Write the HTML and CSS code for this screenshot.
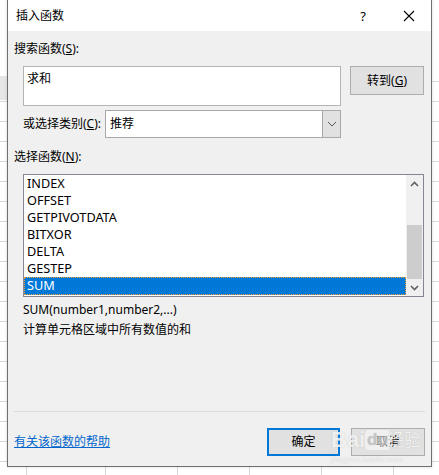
FILE: index.html
```html
<!DOCTYPE html>
<html lang="zh-CN">
<head>
<meta charset="utf-8">
<title>插入函数</title>
<link rel="stylesheet" href="styles.css">
</head>
<body>
<div class="page">
  <div class="dialog">
    <div class="titlebar">
      <span class="title">插入函数</span>
      <span class="help">?</span>
      <span class="close"><svg width="12" height="12" viewBox="0 0 12 12"><path d="M1 1 L11 11 M11 1 L1 11" stroke="#000" stroke-width="1.1" fill="none"/></svg></span>
    </div>
    <div class="body">
      <div class="label l1">搜索函数(<u>S</u>):</div>
      <div class="search-row">
        <div class="search-box">求和</div>
        <div class="btn goto">转到(<u>G</u>)</div>
      </div>
      <div class="cat-row">
        <span class="cat-label">或选择类别(<u>C</u>):</span>
        <div class="select">
          <span class="select-text">推荐</span>
          <span class="select-btn"><svg width="10" height="6" viewBox="0 0 10 6"><path d="M1 1 L5 5 L9 1" stroke="#555" stroke-width="1" fill="none"/></svg></span>
        </div>
      </div>
      <div class="label l2">选择函数(<u>N</u>):</div>
      <div class="listbox">
        <ul class="items">
          <li>INDEX</li>
          <li>OFFSET</li>
          <li>GETPIVOTDATA</li>
          <li>BITXOR</li>
          <li>DELTA</li>
          <li>GESTEP</li>
          <li class="sel">SUM</li>
        </ul>
        <div class="scrollbar">
          <span class="arrow"><svg width="9" height="6" viewBox="0 0 9 6"><path d="M1 5 L4.5 1.5 L8 5" stroke="#606060" stroke-width="1.6" fill="none"/></svg></span>
          <div class="track"><div class="thumb"></div></div>
          <span class="arrow"><svg width="9" height="6" viewBox="0 0 9 6"><path d="M1 1 L4.5 4.5 L8 1" stroke="#606060" stroke-width="1.6" fill="none"/></svg></span>
        </div>
      </div>
      <div class="syntax">SUM(number1,number2,...)</div>
      <div class="desc">计算单元格区域中所有数值的和</div>
      <div class="sep"></div>
      <div class="footer">
        <a class="help-link" href="#">有关该函数的帮助</a>
        <div class="buttons">
          <div class="btn ok">确定</div>
          <div class="btn cancel">取消</div>
        </div>
      </div>
    </div>
    <div class="watermark">
      <span class="wm-bai">Bai</span><span class="wm-du">du</span><span class="wm-jy">经验</span>
      <span class="wm-url">jingyan.baidu.com</span>
    </div>
  </div>
</div>
</body>
</html>
```
FILE: styles.css
```css
* { box-sizing: border-box; }
html, body { margin: 0; padding: 0; }
body {
  width: 439px;
  height: 475px;
  overflow: hidden;
  font-family: "Noto Sans", "Noto Sans CJK SC", sans-serif;
  font-size: 12px;
  color: #000;
  background-color: #fff;
}
.page {
  width: 439px;
  height: 475px;
  padding-left: 7px;
  background-color: #fff;
  background-image:
    linear-gradient(#e6e6e6, #e6e6e6),
    repeating-linear-gradient(to bottom, transparent 0, transparent 19px, #d9d9d9 19px, #d9d9d9 20px),
    repeating-linear-gradient(to right, transparent 0, transparent 71px, #d9d9d9 71px, #d9d9d9 72px);
  background-size: 7px 24px, 439px 420px, 439px 475px;
  background-position: 0 76px, 0 62px, 34px 0;
  background-repeat: no-repeat, no-repeat, repeat-x;
}
.dialog {
  position: relative;
  width: 425px;
  height: 467px;
  background: #f0f0f0;
  border: 1px solid #6f6f6f;
  border-top: none;
  display: flex;
  flex-direction: column;
  box-shadow: 0 0 3px rgba(0,0,0,0.15);
}
.titlebar {
  height: 31px;
  background: #fff;
  display: flex;
  align-items: center;
  padding-left: 8px;
  flex-shrink: 0;
}
.title { font-size: 12px; line-height: 16px; }
.help {
  margin-left: auto;
  font-size: 13px;
  line-height: 16px;
  margin-right: 37px;
}
.close { display: flex; margin-right: 16px; }
.body { display: flex; flex-direction: column; }
.label { line-height: 16px; margin-left: 6px; }
.l1 { margin-top: 10px; }
.search-row { display: flex; margin-top: 9px; margin-left: 15px; height: 40px; }
.search-box {
  width: 318px;
  height: 40px;
  background: #fff;
  border: 1px solid #b4b4b4;
  padding: 4px 3px;
  line-height: 16px;
}
.btn {
  background: #e1e1e1;
  border: 1px solid #adadad;
  display: flex;
  align-items: center;
  justify-content: center;
  line-height: 16px;
}
.goto { width: 74px; height: 29px; margin-left: 9px; }
.cat-row { display: flex; align-items: center; margin-top: 4px; margin-left: 15px; height: 28px; }
.cat-label { width: 82px; line-height: 16px; }
.select {
  width: 236px;
  height: 28px;
  background: #fff;
  border: 1px solid #a8a8a8;
  display: flex;
  align-items: center;
}
.select-text { padding-left: 4px; flex: 1; line-height: 16px; }
.select-btn {
  width: 18px;
  height: 26px;
  background: #e1e1e1;
  border-left: 1px solid #a8a8a8;
  display: flex;
  align-items: center;
  justify-content: center;
}
.l2 { margin-top: 11px; }
.listbox {
  margin-top: 9px;
  margin-left: 15px;
  width: 401px;
  height: 123px;
  background: #fff;
  border: 1px solid #828790;
  display: flex;
}
.items {
  list-style: none;
  margin: 0;
  padding: 0;
  flex: 1;
  font-size: 12.7px;
}
.items li {
  height: 17px;
  line-height: 17px;
  padding-left: 3px;
}
.items li.sel {
  background: #0078d7;
  color: #fff;
  outline: 1px dotted #f0a030;
  outline-offset: -1px;
  height: 18px;
}
.scrollbar {
  width: 17px;
  background: #f0f0f0;
  display: flex;
  flex-direction: column;
  align-items: center;
}
.arrow {
  height: 17px;
  display: flex;
  align-items: center;
  justify-content: center;
}
.track { flex: 1; width: 15px; display: flex; flex-direction: column; justify-content: flex-end; }
.thumb { height: 54px; background: #cdcdcd; }
.syntax { margin-top: 5px; margin-left: 15px; line-height: 16px; }
.desc { margin-top: 4px; margin-left: 15px; line-height: 16px; }
.sep {
  margin-top: 73px;
  margin-left: 6px;
  width: 411px;
  height: 1px;
  background: #dadada;
}
.footer {
  margin-top: 16px;
  margin-left: 6px;
  display: flex;
  align-items: center;
  height: 28px;
}
.help-link {
  color: #0066cc;
  text-decoration: underline;
  line-height: 16px;
}
.buttons { margin-left: auto; display: flex; margin-right: 6px; }
.ok {
  width: 73px;
  height: 28px;
  border: 2px solid #0078d7;
}
.cancel { width: 74px; height: 28px; margin-left: 11px; }
.watermark {
  position: absolute;
  left: 315px;
  top: 418px;
  width: 105px;
  height: 48px;
  pointer-events: none;
  color: rgba(255,255,255,0.8);
  text-shadow: 0 0 1px rgba(140,140,140,0.5);
}
.wm-bai { position: absolute; left: 8px; top: 10px; font: bold 22px/24px "Liberation Sans", sans-serif; }
.wm-du {
  position: absolute; left: 42px; top: 12px;
  font: bold 17px/20px "Liberation Sans", sans-serif;
  background: rgba(255,255,255,0.5);
  border-radius: 4px;
  padding: 0 2px;
  color: rgba(200,200,200,0.6);
}
.wm-jy { position: absolute; left: 64px; top: 12px; font-size: 17px; line-height: 20px; }
.wm-url { position: absolute; left: 8px; top: 36px; font: 9px/10px "Liberation Serif", serif; letter-spacing: 0.3px; }
```
